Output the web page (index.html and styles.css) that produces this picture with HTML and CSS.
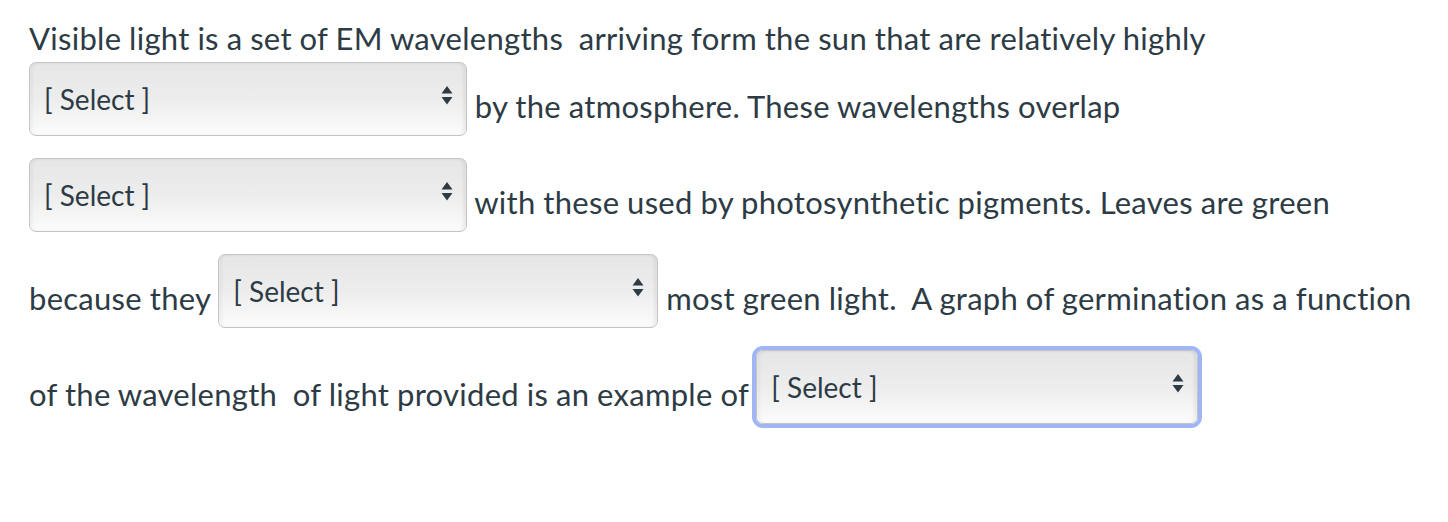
FILE: index.html
```html
<!DOCTYPE html>
<html lang="en">
<head>
<meta charset="utf-8">
<title>Question</title>
<link rel="stylesheet" href="styles.css">
</head>
<body>
<div class="question">
<p class="text">Visible light is a set of EM wavelengths&nbsp; arriving form the sun that are relatively highly <span class="dd w438"><select><option>[ Select ]</option></select><svg class="arrow" width="12" height="19" viewBox="0 0 12 19"><path d="M6 0 L11.5 7.5 L0.5 7.5 Z M0.5 11 L11.5 11 L6 18.5 Z"/></svg></span> by the atmosphere. These wavelengths overlap <span class="dd w438"><select><option>[ Select ]</option></select><svg class="arrow" width="12" height="19" viewBox="0 0 12 19"><path d="M6 0 L11.5 7.5 L0.5 7.5 Z M0.5 11 L11.5 11 L6 18.5 Z"/></svg></span> with these used by photosynthetic pigments. Leaves are green because they <span class="dd w440"><select><option>[ Select ]</option></select><svg class="arrow" width="12" height="19" viewBox="0 0 12 19"><path d="M6 0 L11.5 7.5 L0.5 7.5 Z M0.5 11 L11.5 11 L6 18.5 Z"/></svg></span> most green light.&nbsp; A graph of germination as a function of the wavelength&nbsp; of light provided is an example of <span class="dd w442 focused"><select><option>[ Select ]</option></select><svg class="arrow" width="12" height="19" viewBox="0 0 12 19"><path d="M6 0 L11.5 7.5 L0.5 7.5 Z M0.5 11 L11.5 11 L6 18.5 Z"/></svg></span></p>
</div>
</body>
</html>
```
FILE: styles.css
```css
html, body {
  margin: 0;
  padding: 0;
  background: #ffffff;
}

body {
  font-family: Lato, "Liberation Sans", sans-serif;
  color: #2d3b45;
  font-variant-ligatures: none;
}

.question {
  padding: 14px 28px 0 29px;
}

.text {
  margin: 0;
  font-size: 31px;
  letter-spacing: 0.28px;
  word-spacing: -0.4px;
  line-height: 48px;
}

.dd {
  position: relative;
  display: inline-block;
  vertical-align: 8px;
  margin-bottom: 22px;
  border-radius: 7px;
  letter-spacing: 0;
  word-spacing: 0;
}

.dd select {
  -webkit-appearance: none;
  appearance: none;
  box-sizing: border-box;
  display: block;
  width: 100%;
  height: 74px;
  margin: 0;
  padding: 0 40px 0 14px;
  font-family: Lato, "Liberation Sans", sans-serif;
  font-size: 28px;
  font-variant-ligatures: none;
  color: #2d3b45;
  border: 1px solid #c4c4c4;
  border-radius: 7px;
  background: linear-gradient(to bottom, #e6e6e6 0%, #ededed 50%, #fbfbfb 100%);
  box-shadow: inset -3px 0 3px rgba(0, 0, 0, 0.06), inset 3px 0 3px rgba(0, 0, 0, 0.04), inset 0 -2px 2px rgba(255, 255, 255, 0.9);
  outline: none;
}

.w438 { width: 438px; }
.w440 { width: 440px; }
.w442 { width: 442px; }

.dd .arrow {
  position: absolute;
  right: 14px;
  top: 24px;
  fill: #2d3b45;
}

.focused {
  box-shadow: 0 0 0 4px #a0b5f6;
}
```
